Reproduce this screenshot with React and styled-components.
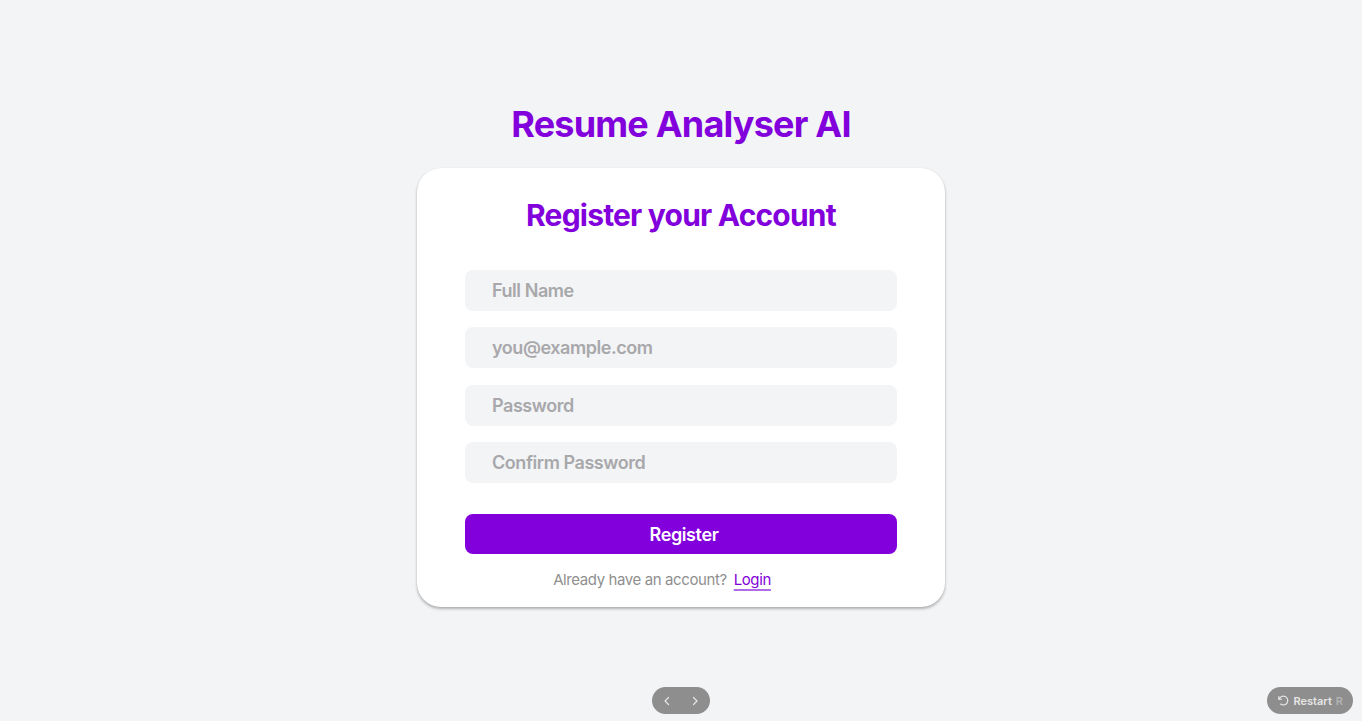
import React from 'react';
import styled, { createGlobalStyle } from 'styled-components';

const GlobalStyle = createGlobalStyle`
  * { box-sizing: border-box; }
  body {
    margin: 0;
    background: #f3f4f6;
    font-family: Inter, "Noto Sans", sans-serif;
    letter-spacing: -0.4px;
  }
`;

const Page = styled.div`
  min-height: 100vh;
  display: flex;
  flex-direction: column;
  align-items: center;
  justify-content: center;
  padding-bottom: 10px;
`;

const Title = styled.h1`
  margin: 0 0 24px;
  font-size: 36px;
  line-height: 40px;
  font-weight: 700;
  letter-spacing: -0.8px;
  color: #8200db;
`;

const Card = styled.div`
  width: 528px;
  background: #fff;
  border-radius: 24px;
  padding: 29px 48px 15px;
  box-shadow: 0 2px 3px rgba(0, 0, 0, 0.28), 0 0 1px rgba(0, 0, 0, 0.12);
`;

const Heading = styled.h2`
  margin: 0;
  text-align: center;
  font-size: 30px;
  line-height: 36px;
  font-weight: 700;
  letter-spacing: -0.8px;
  color: #8200db;
`;

const Form = styled.form`
  margin-top: 37px;
  display: flex;
  flex-direction: column;
  gap: 16.6px;
`;

const Input = styled.input`
  width: 100%;
  height: 41px;
  border: none;
  outline: none;
  border-radius: 8px;
  background: #f3f4f6;
  padding: 0 27px;
  font-family: inherit;
  letter-spacing: -0.45px;
  font-size: 18px;
  font-weight: 600;
  color: #333;
  &::placeholder {
    color: #a8a8ab;
  }
`;

const Button = styled.button`
  margin-top: 14.4px;
  height: 40px;
  width: 100%;
  border: none;
  border-radius: 8px;
  background: #8200db;
  color: #fff;
  padding: 0 0 0 6px;
  font-family: inherit;
  letter-spacing: inherit;
  font-size: 18px;
  font-weight: 600;
  cursor: pointer;
`;

const Footer = styled.p`
  margin: 14px 0 0;
  padding-right: 38px;
  text-align: center;
  font-size: 15px;
  line-height: 24px;
  color: #8f8f8f;
`;

const Login = styled.a`
  margin-left: 7px;
  color: #8200db;
  text-decoration: underline;
  text-decoration-color: #b06be8;
  text-underline-offset: 4px;
  text-decoration-thickness: 2px;
`;

const Pill = styled.div`
  position: fixed;
  bottom: 7px;
  height: 27px;
  border-radius: 14px;
  background: #8e8e8e;
  display: flex;
  align-items: center;
  color: #e6e6e6;
  font-family: Inter, sans-serif;
  letter-spacing: 0;
`;

const NavPill = styled(Pill)`
  left: 652px;
  width: 58px;
  justify-content: space-between;
  padding: 0 10px;
`;

const RestartPill = styled(Pill)`
  right: 9px;
  width: 86px;
  padding: 0 10px;
  gap: 4px;
  font-size: 11px;
  font-weight: 600;
`;

const Key = styled.span`
  margin-left: auto;
  color: #b4b4b4;
`;

export default function App() {
  return (
    <>
      <GlobalStyle />
      <Page>
        <Title>Resume Analyser AI</Title>
        <Card>
          <Heading>Register your Account</Heading>
          <Form onSubmit={(e) => e.preventDefault()}>
            <Input placeholder="Full Name" />
            <Input placeholder="you@example.com" type="email" />
            <Input placeholder="Password" type="password" />
            <Input placeholder="Confirm Password" type="password" />
            <Button type="submit">Register</Button>
          </Form>
          <Footer>
            Already have an account?<Login href="#">Login</Login>
          </Footer>
        </Card>
      </Page>
      <NavPill>
        <svg width="10" height="10" viewBox="0 0 10 10" fill="none" stroke="currentColor" strokeWidth="1.2" strokeLinecap="round" strokeLinejoin="round">
          <path d="M6.5 1.5 3 5l3.5 3.5" />
        </svg>
        <svg width="10" height="10" viewBox="0 0 10 10" fill="none" stroke="currentColor" strokeWidth="1.2" strokeLinecap="round" strokeLinejoin="round">
          <path d="M3.5 1.5 7 5 3.5 8.5" />
        </svg>
      </NavPill>
      <RestartPill>
        <svg width="13" height="13" viewBox="0 0 14 14" fill="none" stroke="currentColor" strokeWidth="1.3" strokeLinecap="round" strokeLinejoin="round">
          <path d="M2 2.5v3h3" />
          <path d="M2.3 5.5A5 5 0 1 1 4 11" />
        </svg>
        Restart
        <Key>R</Key>
      </RestartPill>
    </>
  );
}
